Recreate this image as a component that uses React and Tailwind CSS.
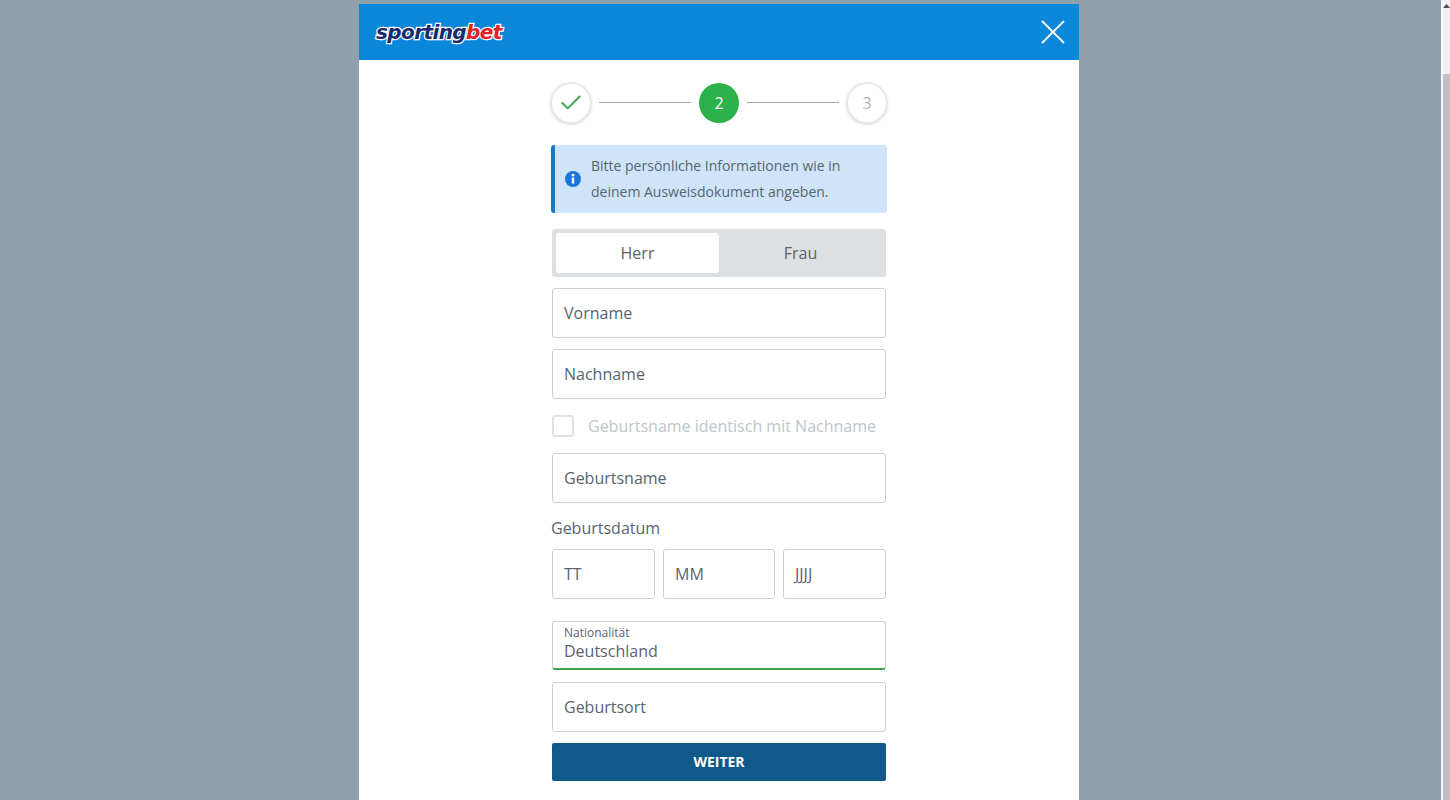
import { Check, X } from 'lucide-react'

const Field = ({ label, className = 'h-[50px] mb-[11px]' }) => (
  <div className={`${className} flex items-center border border-[#ccd1d5] rounded-[3px] px-[11px] text-[16px] text-[#56656f]`}>{label}</div>
)

export default function App() {
  return (
    <div className="h-[800px] overflow-hidden flex bg-[#8fa0ad] font-['Open_Sans',sans-serif]">
      <div className="flex-1 flex justify-center pt-1 pr-[3px]">
        <div className="w-[720px] h-[796px] bg-white">
          <div className="h-14 bg-[#0a87d8] flex items-center justify-between pl-[17px] pr-[5px]">
            <span className="text-[20px] leading-none font-black italic tracking-[-0.6px] font-['DejaVu_Sans',sans-serif] [-webkit-text-stroke:2.5px_white] [paint-order:stroke_fill]">
              <span className="text-[#1a2a6c]">sporting</span><span className="text-[#e1212b]">bet</span>
            </span>
            <X size={42} strokeWidth={1.8} color="white" absoluteStrokeWidth />
          </div>

          <div className="w-[336px] mx-auto pt-[22px]">
            <div className="flex items-center h-[42px] mx-[-1px]">
              <div className="w-[42px] h-[42px] rounded-full bg-white border-2 border-[#e6e8ea] shadow-sm flex items-center justify-center">
                <Check size={26} strokeWidth={2} color="#3fa354" absoluteStrokeWidth />
              </div>
              <div className="w-[92px] h-px ml-[7px] mb-px bg-[#a3a9ad]" />
              <div className="w-10 h-10 ml-2 rounded-full bg-[#2cb24a] flex items-center justify-center text-white text-[16px]">2</div>
              <div className="w-[92px] h-px ml-2 mb-px bg-[#a3a9ad]" />
              <div className="w-[42px] h-[42px] ml-[7px] rounded-full bg-white border-2 border-[#e6e8ea] shadow-sm flex items-center justify-center text-[#aeb5ba] text-[16px]">3</div>
            </div>

            <div className="mt-[21px] h-[68px] bg-[#cfe4f9] border-l-4 border-[#1878c4] rounded-[3px] flex items-center pl-[10px] text-[14px] leading-[26px] text-[#56656f]">
              <svg width="16" height="16" viewBox="0 0 16 16" className="shrink-0">
                <circle cx="8" cy="8" r="8" fill="#1878d8" />
                <circle cx="8" cy="4.2" r="1.4" fill="white" />
                <rect x="6.8" y="6.6" width="2.4" height="6" fill="white" />
              </svg>
              <div className="ml-[10px]">Bitte persönliche Informationen wie in<br />deinem Ausweisdokument angeben.</div>
            </div>

            <div className="w-[334px] ml-px mt-4 h-12 bg-[#dce0e3] rounded-[3px] p-1 flex text-[16px] text-[#56656f]">
              <div className="flex-1 bg-white rounded-[3px] flex items-center justify-center">Herr</div>
              <div className="flex-1 flex items-center justify-center">Frau</div>
            </div>

            <div className="w-[334px] ml-px mt-[11px]">
              <Field label="Vorname" />
              <Field label="Nachname" />
              <div className="flex items-center h-[22px] mt-4 mb-4">
                <div className="w-[22px] h-[22px] border-2 border-[#dde2e6] rounded-[3px]" />
                <span className="ml-[14px] text-[16px] text-[#bcc6cd]">Geburtsname identisch mit Nachname</span>
              </div>
              <Field label="Geburtsname" className="h-[50px]" />
              <div className="mt-[13px] ml-[-1px] text-[16px] leading-[24px] text-[#56656f]">Geburtsdatum</div>
              <div className="mt-[9px] flex gap-2">
                <Field label="TT" className="h-[50px] w-[103px]" />
                <Field label="MM" className="h-[50px] w-[112px]" />
                <Field label="JJJJ" className="h-[50px] w-[103px]" />
              </div>
              <div className="mt-[22px] h-[49px] border border-[#ccd1d5] border-b-2 border-b-[#3fa354] rounded-[3px] px-[11px] pt-1 mb-[12px]">
                <div className="text-[12px] leading-[14px] text-[#56656f]">Nationalität</div>
                <div className="text-[16px] leading-[20px] mt-px text-[#56656f]">Deutschland</div>
              </div>
              <Field label="Geburtsort" />
              <div className="h-[38px] pb-px bg-[#0f5a8a] rounded-[2px] flex items-center justify-center text-white text-[14px] font-bold">WEITER</div>
            </div>
          </div>
        </div>
      </div>
      <div className="w-[9px] bg-[#f1f1f1] border-l-2 border-[#f8f8f8] flex flex-col">
        <div className="h-[74px] flex justify-center pt-1">
          <svg width="7" height="4" viewBox="0 0 7 4"><path d="M3.5 0L7 4H0z" fill="#505050" /></svg>
        </div>
        <div className="flex-1 bg-[#c1c1c1]" />
      </div>
    </div>
  )
}
